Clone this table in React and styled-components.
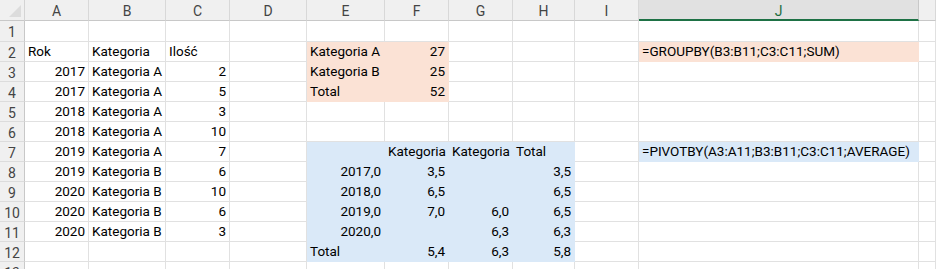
import React from "react";
import styled, { createGlobalStyle } from "styled-components";

const GlobalStyle = createGlobalStyle`
  body {
    margin: 0;
    background: #ffffff;
    overflow: hidden;
  }
`;

const fills = {
  orange: "#fbe2d5",
  blue: "#dae9f8",
};

// K is only partly visible at the right edge, its letter is off screen
const columns = [
  { key: "A", width: 64 },
  { key: "B", width: 77 },
  { key: "C", width: 64 },
  { key: "D", width: 77 },
  { key: "E", width: 78 },
  { key: "F", width: 64 },
  { key: "G", width: 64 },
  { key: "H", width: 62 },
  { key: "I", width: 64 },
  { key: "J", width: 280 },
  { key: "K", width: 17, hidden: true },
];

const Sheet = styled.div`
  display: grid;
  grid-template-columns: 25px ${columns.map((c) => `${c.width}px`).join(" ")};
  grid-template-rows: 21px 21px;
  grid-auto-rows: 20px;
  font-family: Roboto, "Noto Sans", sans-serif;
  font-size: 13.5px;
  color: #000;
  width: 936px;
  overflow: hidden;
`;

const Corner = styled.div`
  background: #f0f0f0;
  border-right: 1px solid #d4d4d4;
  border-bottom: 1px solid #c8c8c8;
  box-sizing: border-box;
  position: relative;

  &::after {
    content: "";
    position: absolute;
    right: 3px;
    bottom: 3px;
    border-left: 12px solid transparent;
    border-bottom: 12px solid #dcdcdc;
  }
`;

const ColHead = styled.div`
  box-sizing: border-box;
  display: flex;
  align-items: center;
  justify-content: center;
  font-size: 14px;
  background: ${({ $active }) => ($active ? "#e1e1e1" : "#f0f0f0")};
  color: ${({ $active }) => ($active ? "#1e6e42" : "#444")};
  border-right: 1px solid ${({ $active }) => ($active ? "#c8c8c8" : "#d8d8d8")};
  border-bottom: ${({ $active }) =>
    $active ? "2px solid #1e7145" : "1px solid #c8c8c8"};
  padding-top: ${({ $active }) => ($active ? "2px" : "1px")};
`;

const RowHead = styled.div`
  box-sizing: border-box;
  display: flex;
  align-items: center;
  justify-content: center;
  padding-top: 2px;
  font-size: 14px;
  color: #444;
  background: #f0f0f0;
  border-right: 1px solid #c8c8c8;
  border-bottom: 1px solid #dcdcdc;
`;

const Cell = styled.div`
  box-sizing: border-box;
  display: flex;
  align-items: flex-end;
  justify-content: ${({ $align }) => ($align === "right" ? "flex-end" : "flex-start")};
  padding: 0 3px 0 3px;
  white-space: nowrap;
  overflow: hidden;
  line-height: 19px;
  background: ${({ $fill }) => ($fill ? fills[$fill] : "#fff")};
  border-right: 1px solid ${({ $fill }) => ($fill ? fills[$fill] : "#e1e1e1")};
  border-bottom: 1px solid ${({ $fill }) => ($fill ? fills[$fill] : "#e1e1e1")};
`;

// helpers: left text, right text
const L = (v, fill) => ({ v, align: "left", fill });
const R = (v, fill) => ({ v, align: "right", fill });

const rows = [
  {},
  {
    A: L("Rok"),
    B: L("Kategoria"),
    C: L("Ilość"),
    E: L("Kategoria A", "orange"),
    F: R("27", "orange"),
    J: L("=GROUPBY(B3:B11;C3:C11;SUM)", "orange"),
  },
  { A: R("2017"), B: L("Kategoria A"), C: R("2"), E: L("Kategoria B", "orange"), F: R("25", "orange") },
  { A: R("2017"), B: L("Kategoria A"), C: R("5"), E: L("Total", "orange"), F: R("52", "orange") },
  { A: R("2018"), B: L("Kategoria A"), C: R("3") },
  { A: R("2018"), B: L("Kategoria A"), C: R("10") },
  {
    A: R("2019"),
    B: L("Kategoria A"),
    C: R("7"),
    E: L("", "blue"),
    // pivot headers are cut by the next filled cell in Excel, only "Kategoria" shows
    F: L("Kategoria", "blue"),
    G: L("Kategoria", "blue"),
    H: L("Total", "blue"),
    J: L("=PIVOTBY(A3:A11;B3:B11;C3:C11;AVERAGE)", "blue"),
  },
  { A: R("2019"), B: L("Kategoria B"), C: R("6"), E: R("2017,0", "blue"), F: R("3,5", "blue"), G: R("", "blue"), H: R("3,5", "blue") },
  { A: R("2020"), B: L("Kategoria B"), C: R("10"), E: R("2018,0", "blue"), F: R("6,5", "blue"), G: R("", "blue"), H: R("6,5", "blue") },
  { A: R("2020"), B: L("Kategoria B"), C: R("6"), E: R("2019,0", "blue"), F: R("7,0", "blue"), G: R("6,0", "blue"), H: R("6,5", "blue") },
  { A: R("2020"), B: L("Kategoria B"), C: R("3"), E: R("2020,0", "blue"), F: R("", "blue"), G: R("6,3", "blue"), H: R("6,3", "blue") },
  { E: L("Total", "blue"), F: R("5,4", "blue"), G: R("6,3", "blue"), H: R("5,8", "blue") },
  {},
];

export default function App() {
  return (
    <>
      <GlobalStyle />
      <Sheet>
        <Corner />
        {columns.map((c) => (
          <ColHead key={c.key} $active={c.key === "J"}>
            {c.hidden ? null : c.key}
          </ColHead>
        ))}
        {rows.map((row, i) => (
          <React.Fragment key={i}>
            <RowHead>{i + 1}</RowHead>
            {columns.map((c) => {
              const cell = row[c.key];
              return (
                <Cell key={c.key} $align={cell?.align} $fill={cell?.fill}>
                  {cell?.v}
                </Cell>
              );
            })}
          </React.Fragment>
        ))}
      </Sheet>
    </>
  );
}
